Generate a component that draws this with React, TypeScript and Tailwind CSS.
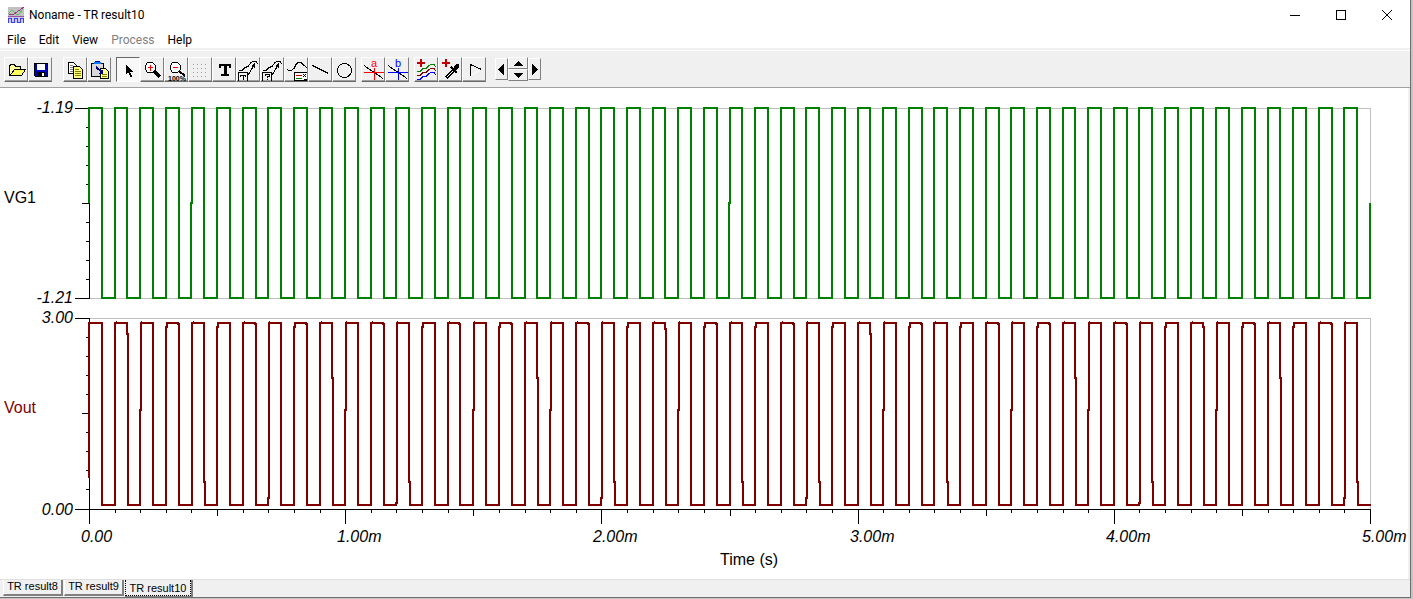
import { clsx } from "clsx";
import type { ReactNode } from "react";

const UI_FONT = "font-[Roboto,'Noto_Sans',sans-serif]";

// chart geometry
const LEFT = 89;
const RIGHT = 1370;
const PERIODS = 50;
const STEP = (RIGHT - LEFT) / PERIODS;

// y at which an edge shifts by one pixel, keyed by period
const INPUT_RISE: Record<number, number> = { 4: 203, 25: 203 };
const OUTPUT_RISE: Record<number, number> = {
  2: 410, 3: 327, 5: 327, 7: 498, 8: 327, 10: 410, 12: 503, 13: 327, 15: 410,
  16: 327, 18: 410, 20: 498, 21: 327, 23: 410, 24: 327, 26: 327, 28: 498,
  29: 327, 31: 410, 32: 327, 34: 327, 36: 410, 37: 327, 39: 410, 41: 503,
  42: 327, 44: 410, 45: 327, 47: 327, 49: 498,
};
const OUTPUT_FALL: Record<number, number> = {
  1: 334, 4: 482, 9: 378, 12: 482, 17: 378, 20: 482, 22: 329, 25: 482,
  28: 482, 30: 334, 33: 482, 38: 378, 41: 482, 43: 327, 46: 378, 49: 482,
};
const OUTPUT_ROUNDED = [3, 6, 8, 11, 14, 16, 19, 24, 27, 32, 35, 37, 40, 45, 48];

function squareWave(
  start: number,
  high: number,
  low: number,
  rise: Record<number, number> = {},
  fall: Record<number, number> = {},
  rounded: number[] = [],
) {
  let d = `M${LEFT} ${start}`;
  for (let k = 0; k < PERIODS; k++) {
    const up = LEFT + k * STEP;
    const down = Math.round(up + STEP / 2);
    if (k in rise) {
      const x = Math.floor(up + 0.4);
      d += `H${x}V${rise[k]}H${x + 1}V${high}`;
    } else {
      d += `H${Math.round(up + 0.03)}V${high}`;
    }
    if (k in fall) {
      d += `H${down}V${fall[k]}H${down + 1}V${low}`;
    } else if (rounded.includes(k)) {
      d += `H${down - 1}V${high + 1}H${down}V${low}`;
    } else {
      d += `H${down}V${low}`;
    }
  }
  return `${d}H${RIGHT}`;
}

const vg1Path = squareWave(203, 108, 298, INPUT_RISE) + "V203";
const voutPath =
  squareWave(478, 323, 505, OUTPUT_RISE, OUTPUT_FALL, OUTPUT_ROUNDED) + "h1";

const overshoots = Array.from({ length: PERIODS }, (_, k) => k).filter(
  (k) => k > 0 && OUTPUT_RISE[k] !== 327,
);

function yTicks(top: number, bottom: number) {
  let d = "";
  for (let i = 0; i <= 10; i++) {
    const y = Math.floor(top + ((bottom - top) * i) / 10) + 0.5;
    const len = i % 10 === 0 ? 14 : i === 5 ? 7 : 3;
    d += `M${LEFT - len} ${y}H${LEFT + 1}`;
  }
  return d;
}

function xTicks() {
  let d = "";
  for (let i = 0; i <= PERIODS; i++) {
    const x = Math.round(LEFT + i * STEP) + 0.5;
    const len = i % 10 === 0 ? 14 : i % 5 === 0 ? 6 : 3;
    d += `M${x} 510v${len}`;
  }
  return d;
}

function Chart() {
  const timeLabels = ["0.00", "1.00m", "2.00m", "3.00m", "4.00m", "5.00m"];
  return (
    <svg
      viewBox="0 88 1408 491"
      role="img"
      aria-label="Transient result"
      className="block h-auto w-full bg-white font-['Liberation_Sans',Arial,sans-serif] text-[16px]"
    >
      <g fill="none" strokeWidth="1" shapeRendering="crispEdges">
        <path d="M89 108.5H1370.5V298.5H89M89 318.5H1370.5V509" stroke="#c0c0c0" />
        <path d="M89.5 108V299M89.5 319V523M89 509.5H1371" stroke="#000" />
        <path d={yTicks(108, 298) + yTicks(318, 509) + xTicks()} stroke="#000" />
        <path d={vg1Path} stroke="#008000" strokeWidth="2" />
        <path d={voutPath} stroke="#800000" strokeWidth="2" />
        {overshoots.map((k) => (
          <path
            key={k}
            d={`M${Math.round(LEFT + k * STEP + 0.03) + 1.5} 321v1`}
            stroke="#800000"
          />
        ))}
      </g>

      <g fill="#000" fontStyle="italic">
        <g textAnchor="end">
          <text x="73" y="113">-1.19</text>
          <text x="73" y="303">-1.21</text>
          <text x="73" y="323">3.00</text>
          <text x="73" y="515">0.00</text>
        </g>
        {timeLabels.map((label, i) => (
          <text key={label} x={Math.round(LEFT + i * 10 * STEP) - 8} y="542">
            {label}
          </text>
        ))}
      </g>
      <text x="4" y="203">VG1</text>
      <text x="4" y="413" fill="#800000">Vout</text>
      <text x="720" y="565">Time (s)</text>
    </svg>
  );
}

function Glyph({ children }: { children: ReactNode }) {
  return (
    <svg
      viewBox="0 0 24 24"
      width="24"
      height="24"
      fill="none"
      stroke="#000"
      strokeWidth="1"
      shapeRendering="crispEdges"
      aria-hidden="true"
      className="block shrink-0"
    >
      {children}
    </svg>
  );
}

const letter = "font-['Liberation_Sans',sans-serif]";

const icons = {
  open: (
    <>
      <path d="M5.500 18V8.500h1v-1h4v1h1v1h5v3" fill="#ffffa0" />
      <path d="M6 18.500L10.500 12.500H21.500L17.500 18.500Z" fill="#ffff60" />
      <path d="M5 18.500H18" />
    </>
  ),
  save: (
    <>
      <path d="M6.500 6.500H19.500V19.500H7.500L6.500 18.500Z" fill="#0000c0" />
      <path d="M9 7H17V13H9Z" fill="#fff" stroke="none" />
      <path d="M9 15H17V19H9Z" fill="#000" stroke="none" />
      <path d="M14 16H16V19H14Z" fill="#fff" stroke="none" />
    </>
  ),
  copy: (
    <>
      <path d="M5.500 5.500H10.500L13.500 8.500V16.500H5.500Z" fill="#fff" />
      <path d="M7 8.500H10M7 10.500H10M7 12.500H10M7 14.500H10" stroke="#808080" />
      <path d="M10.500 9.500H16.500L19.500 12.500V21.500H10.500Z" fill="#ffff80" />
      <path d="M12 12.500H16M12 14.500H18M12 16.500H18M12 18.500H18" stroke="#808000" />
    </>
  ),
  paste: (
    <>
      <path d="M4.500 6.500H16.500V19.500H4.500Z" fill="#d8d8d8" />
      <path d="M7 6H14" stroke="#0080ff" strokeWidth="2" />
      <path d="M8 4.500H13" stroke="#0000c0" />
      <path d="M13.500 11.500H18.500L21.500 14.500V21.500H13.500Z" fill="#ffff80" />
      <path d="M15 17.500H20M15 19.500H20" stroke="#808000" />
      <path d="M9 10L15 15" stroke="#000080" strokeWidth="2" />
      <path d="M16 12V17H11Z" fill="#000080" stroke="none" />
    </>
  ),
  pointer: (
    <path
      d="M10 8V17L12 15.500L14 19.500H16L14 15H17Z"
      fill="#000"
      stroke="none"
    />
  ),
  zoomIn: (
    <>
      <path d="M7.500 5.500H12.500L15.500 8.500V12.500L12.500 15.500H7.500L5.500 12.500V8.500Z" fill="#fff" />
      <path d="M10.500 8V14M8 10.500H13" stroke="#f00" />
      <path d="M14 14L20 20" strokeWidth="3" />
    </>
  ),
  zoomAll: (
    <>
      <path d="M8.500 5.500H13.500L16.500 8.500V12.500L13.500 15.500H8.500L6.500 12.500V8.500Z" fill="#fff" />
      <path d="M9 10.500H14" stroke="#f00" />
      <path d="M15 14L21 19" strokeWidth="2" />
      <text x="4" y="24" fill="#000" stroke="none" className={`${letter} text-[7px] font-bold`}>
        100%
      </text>
    </>
  ),
  grid: (
    <path
      d="M5 7.500H20M5 11.500H20M5 15.500H20M5 19.500H20"
      stroke="#a0a0a0"
      strokeDasharray="1 3"
    />
  ),
  text: (
    <path
      d="M7 7H19V11H17V9H14.500V17H17V19H9V17H11.500V9H9V11H7Z"
      fill="#000"
      stroke="none"
    />
  ),
  arrowText: (
    <>
      <path d="M3 13.500H6L9 10.500L12 9.500L15 5.500L17 4.500H20L22 7" />
      <path d="M11.500 19L17.500 9" />
      <path d="M15 9L19 6V11Z" fill="#000" stroke="none" />
      <path d="M2.500 24V15.500H11.500V24" />
      <path d="M4.500 20V18.500H9.500V20M7 18V23" />
    </>
  ),
  arrowQuery: (
    <>
      <path d="M3 13.500H6L9 10.500L12 9.500L15 5.500L17 4.500H20L22 7" />
      <path d="M11.500 19L17.500 9" />
      <path d="M15 9L19 6V11Z" fill="#000" stroke="none" />
      <path d="M2.500 24V15.500H11.500V24" />
      <path d="M5 18.500V17.500H9.500V19.500H7.500V21M7 22.500H8" />
    </>
  ),
  legend: (
    <>
      <path d="M3 12.500L4.500 13.500H7L10 11.500L12 7.500L14 5.500H17L20 8.500L23 10.500" />
      <path d="M24 15.500H10.500V23.500H24" fill="#fff" />
      <path d="M12 18.500H18" stroke="#c00000" />
      <path d="M12 21.500H18" stroke="#008000" />
      <path d="M19 17L22 20M22 17L19 20M20 22.500H23" />
    </>
  ),
  line: <path d="M4.500 8.500L20.500 16.500" />,
  circle: <circle cx="12.500" cy="13.500" r="7" />,
  cursorA: (
    <>
      <path d="M3 8.500L22 21.500" />
      <path d="M3 15.500H23M13.500 11V23" stroke="#f00" />
      <text x="10" y="10" fill="#f00" stroke="none" className={`${letter} text-[11px]`}>a</text>
    </>
  ),
  cursorB: (
    <>
      <path d="M3 8.500L22 21.500" />
      <path d="M3 15.500H23M13.500 11V23" stroke="#00f" />
      <text x="10" y="10" fill="#00f" stroke="none" className={`${letter} text-[11px]`}>b</text>
    </>
  ),
  addCurve: (
    <>
      <path d="M3 14.500H6L9 11.500H12L15 8.500L17 7.500H20L22 10" stroke="#008000" />
      <path d="M3 18.500H6L9 15.500H12L15 12.500L17 11.500H20L22 14" stroke="#800000" />
      <path d="M3 22.500H6L9 19.500H12L15 16.500L17 15.500H20L22 18" stroke="#00f" />
      <path d="M3 6H11M7 2V10" stroke="#c00000" strokeWidth="2" />
    </>
  ),
  probe: (
    <>
      <path d="M4 6H12M8 2V10" stroke="#c00000" strokeWidth="2" />
      <path d="M8 21L15 14" strokeWidth="3" />
      <path d="M9 20L15 14" stroke="#fff" />
      <path d="M13 10L19 16" strokeWidth="2" />
      <path d="M15 12L18 7H21V10L17 14Z" fill="#000" stroke="none" />
    </>
  ),
  flag: (
    <>
      <path d="M8.500 18.500L19 12.500" stroke="#fff" />
      <path d="M8.500 19V7.500L19.500 12.500" />
    </>
  ),
};

type IconName = keyof typeof icons;

function ToolButton({
  name,
  label,
  pressed = false,
}: {
  name: IconName;
  label: string;
  pressed?: boolean;
}) {
  return (
    <button
      type="button"
      aria-label={label}
      title={label}
      aria-pressed={pressed}
      className={clsx(
        "h-[25px] w-6 overflow-hidden border",
        pressed
          ? "border-t-[#696969] border-r-white border-b-white border-l-[#696969] bg-[#f8f8f8]"
          : "border-t-white border-r-[#808080] border-b-[#696969] border-l-white bg-[#f0f0f0] shadow-[inset_0_-1px_0_#a0a0a0]",
      )}
    >
      <span className="-m-px block">
        <Glyph>{icons[name]}</Glyph>
      </span>
    </button>
  );
}

const toolGroups: { name: IconName; label: string; pressed?: boolean }[][] = [
  [
    { name: "open", label: "Open" },
    { name: "save", label: "Save" },
  ],
  [
    { name: "copy", label: "Copy" },
    { name: "paste", label: "Paste" },
  ],
  [
    { name: "pointer", label: "Select", pressed: true },
    { name: "zoomIn", label: "Zoom in" },
    { name: "zoomAll", label: "Zoom 100%" },
    { name: "grid", label: "Grid" },
    { name: "text", label: "Text" },
    { name: "arrowText", label: "Auto label" },
    { name: "arrowQuery", label: "Curve query" },
    { name: "legend", label: "Legend" },
    { name: "line", label: "Line" },
    { name: "circle", label: "Ellipse" },
  ],
  [
    { name: "cursorA", label: "Cursor a" },
    { name: "cursorB", label: "Cursor b" },
  ],
  [
    { name: "addCurve", label: "Add curves" },
    { name: "probe", label: "Probe" },
    { name: "flag", label: "Post-processor" },
  ],
];

const arrowPaths = {
  left: "M7 0V11L1 5.500Z",
  right: "M2 0V11L8 5.500Z",
  up: "M0 6H10L5 1Z",
  down: "M0 1H10L5 6Z",
};

function ArrowButton({ dir }: { dir: keyof typeof arrowPaths }) {
  const side = dir === "left" || dir === "right";
  return (
    <button
      type="button"
      aria-label={`Move ${dir}`}
      className={clsx(
        "flex items-center justify-center border border-t-white border-r-[#808080] border-b-[#808080] border-l-white bg-[#f0f0f0]",
        side ? "h-[22px] w-[13px]" : "h-3 w-5",
      )}
    >
      <svg
        width="10"
        height={side ? 11 : 7}
        shapeRendering="crispEdges"
        aria-hidden="true"
        className="shrink-0"
      >
        <path d={arrowPaths[dir]} fill="#000" />
      </svg>
    </button>
  );
}

function Toolbar() {
  return (
    <div
      role="toolbar"
      aria-label="Diagram tools"
      className="flex h-[38px] items-center gap-[5px] border-t border-b border-t-white border-b-[#a0a0a0] bg-[#f0f0f0] pl-1"
    >
      {toolGroups.map((group, i) => (
        <div key={i} className={clsx("flex", i === 0 && "mr-1.5")}>
          {group.map((tool) => (
            <ToolButton key={tool.name} {...tool} />
          ))}
        </div>
      ))}
      <div className="ml-1 flex items-center">
        <ArrowButton dir="left" />
        <div className="flex flex-col">
          <ArrowButton dir="up" />
          <ArrowButton dir="down" />
        </div>
        <ArrowButton dir="right" />
      </div>
    </div>
  );
}

function TitleBar() {
  return (
    <header className="flex h-[29px] items-center bg-white pl-2">
      <svg width="16" height="16" shapeRendering="crispEdges" fill="none" aria-hidden="true">
        <path d="M0 0H16V10H0Z" fill="#c0c0c0" />
        <path d="M0 10H16V16H0Z" fill="#c8c8e8" />
        <path d="M0 7L4 3L8 7L11 7L15 2" stroke="#60c060" />
        <path d="M1 8L6 7L16 0" stroke="#a03090" />
        <path d="M0 9.500H16" stroke="#a050a0" />
        <path d="M0.500 16V11.500H3.500V15.500H6.500V11.500H9.500V15.500H12.500V11.500H15.500V16" stroke="#4040e0" />
      </svg>
      <h1 className="ml-[5px] text-[12px] leading-4 text-black">Noname - TR result10</h1>
      <div className="ml-auto flex">
        <WindowButton label="Minimize" d="M0 5.500H10" />
        <WindowButton label="Maximize" d="M0.500 0.500H9.500V9.500H0.500Z" />
        <WindowButton label="Close" d="M0 0L10 10M10 0L0 10" smooth />
      </div>
    </header>
  );
}

function WindowButton({
  label,
  d,
  smooth = false,
}: {
  label: string;
  d: string;
  smooth?: boolean;
}) {
  return (
    <button
      type="button"
      aria-label={label}
      className="flex h-7 w-[46px] items-center justify-center"
    >
      <svg
        width="10"
        height="10"
        fill="none"
        stroke="#000"
        shapeRendering={smooth ? "auto" : "crispEdges"}
        aria-hidden="true"
      >
        <path d={d} />
      </svg>
    </button>
  );
}

function MenuBar() {
  return (
    <nav className="flex h-[19px] items-end gap-[13px] bg-white pl-[7px] text-[12px] leading-4">
      {["File", "Edit", "View", "Process", "Help"].map((item) => (
        <button
          key={item}
          type="button"
          disabled={item === "Process"}
          className="text-black disabled:text-[#808080]"
        >
          {item}
        </button>
      ))}
    </nav>
  );
}

function ResultTabs() {
  return (
    <div
      role="tablist"
      className="flex h-[18px] items-start border-t border-[#e0e0e0] bg-[#f0f0f0] pl-[3px] font-['Liberation_Sans',Arial,sans-serif] text-[11px] leading-3 text-black"
    >
      {["TR result8", "TR result9"].map((tab) => (
        <button
          key={tab}
          type="button"
          role="tab"
          aria-selected={false}
          className="mr-px h-4 w-[60px] border-r-2 border-b-2 border-l border-r-[#808080] border-b-[#808080] border-l-white pb-0.5 whitespace-nowrap"
        >
          {tab}
        </button>
      ))}
      <button
        type="button"
        role="tab"
        aria-selected
        className="h-[17px] w-[68px] border-r-2 border-b border-[#808080] whitespace-nowrap"
      >
        <span className="block h-4 border border-t-0 border-dotted border-black pt-0.5">
          TR result10
        </span>
      </button>
    </div>
  );
}

export default function App() {
  return (
    <div className="flex min-h-screen bg-[#c4c4c4] pr-0.5 pb-px">
      <div
        className={clsx(
          "flex min-w-0 flex-1 flex-col border-r border-b border-[#6e6e6e] bg-[#f0f0f0]",
          UI_FONT,
        )}
      >
        <TitleBar />
        <MenuBar />
        <div className="h-0.5 bg-[#f0f0f0]" />
        <Toolbar />
        <main className="flex-1 pr-0.5">
          <Chart />
        </main>
        <ResultTabs />
      </div>
    </div>
  );
}
